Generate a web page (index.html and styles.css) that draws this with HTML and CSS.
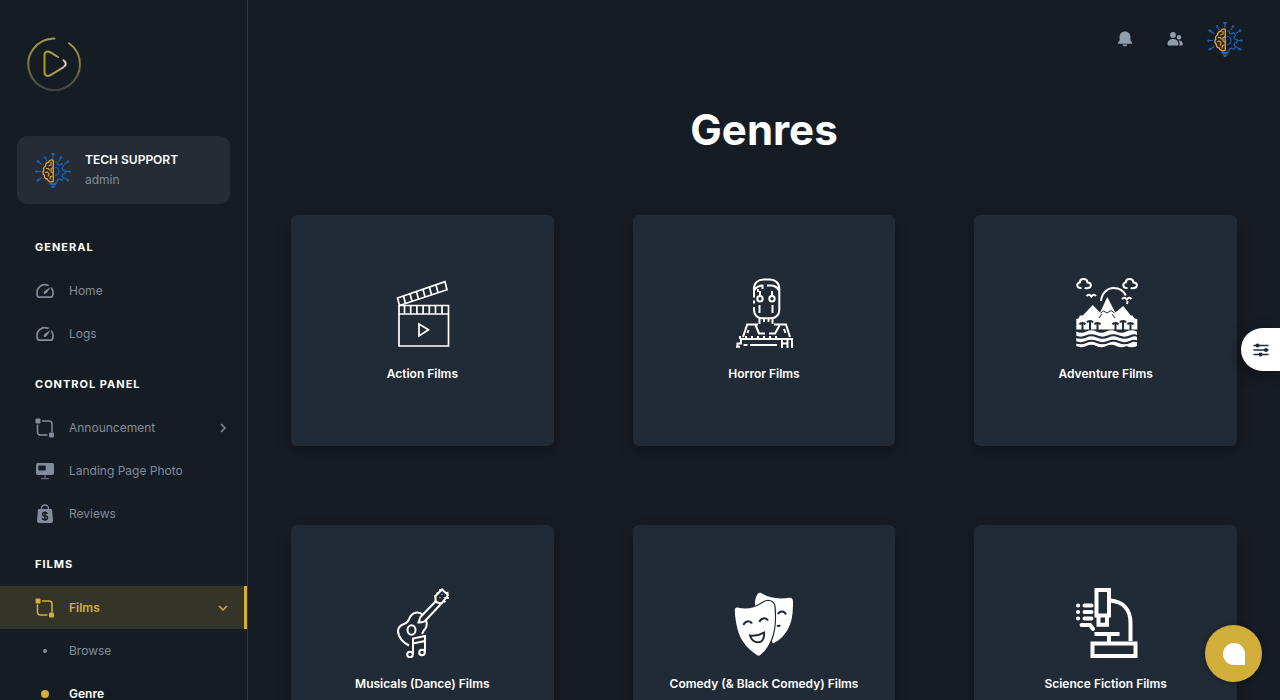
FILE: index.html
```html
<!DOCTYPE html>
<html lang="en">
<head>
    <meta charset="UTF-8">
    <meta name="viewport" content="width=device-width, initial-scale=1.0">
    <title>Genres</title>
    <link rel="stylesheet" href="styles.css">
</head>
<body>
    <svg class="sprite" aria-hidden="true">
        <symbol id="avatar" viewBox="0 0 36 36">
            <g fill="none" stroke="#1766bd" stroke-width="1.1">
                <path d="M18 3v4M10.500 6.500l2 3M25.500 6.500l-2 3M3.500 10l3.500 2.500M32.500 10l-3.500 2.500M2 19.500h4M30 19.500h4M3.500 28l3.500-2.500M32.500 28l-3.500-2.500"/>
                <path d="M20 10h2l.5 2 2 1 2-1.500 2 2.500-1.500 2 .8 2 2.200.5v3l-2.200.5-.8 2 1.500 2-2 2.500-2-1.500-2 1-.5 2h-2"/>
                <path d="M20 15.500a4 4 0 0 1 0 8"/>
            </g>
            <g fill="#1766bd">
                <path d="M16 1h4l-1 2.500h-2zM14 31h8l-1 2h-6zM15.500 33.500h5L19 36h-2z"/>
                <circle cx="10" cy="5.500" r="1.200"/><circle cx="26" cy="5.500" r="1.200"/>
                <circle cx="3" cy="9.700" r="1.400"/><circle cx="33" cy="9.700" r="1.400"/>
                <circle cx="1.500" cy="19.500" r="1.200"/><circle cx="34.500" cy="19.500" r="1.200"/>
                <circle cx="3" cy="28.300" r="1.300"/><circle cx="33" cy="28.300" r="1.300"/>
            </g>
            <path fill="#2b2a26" stroke="#eea63a" stroke-width="1.300" d="M18.300 8.300c-2-1-4.300.2-4.600 2-2 0-3.500 1.700-3 3.700-2 .8-2.600 2.600-1.900 4.200-1.500 1.600-1.200 4 .5 5-.2 2.200 1.100 3.700 3 3.800.4 2.500 4 3.700 6 2z"/>
            <path fill="none" stroke="#eea63a" stroke-width="1.100" d="M16 10v3l-2.500 1M11 16.500h2.500l1 2M18 15.500l-2 1.500v3l2 1M10 20.500l2.500-.5 1.500 2-1 2.500M17.500 24l-2 .5-.5 3"/>
        </symbol>
        <symbol id="gauge" viewBox="0 0 20 20">
            <path fill="none" stroke="currentColor" stroke-width="1.700" stroke-linecap="round" d="M13 4.300C8 2.300 2 5.500 2 11.500c0 1.500.2 2.800.7 3.900.2.500.6.800 1.200.8h12.200c.6 0 1-.3 1.200-.8 1.200-2.800.8-6-.7-8.100"/>
            <path fill="currentColor" d="M15.300 6.200c-2.700 1.500-5.700 3.500-6.400 4.700-.8 1.400.9 2.800 2.100 1.700 1.100-1 3.100-3.900 4.300-6.400z"/>
        </symbol>
        <symbol id="nodes" viewBox="0 0 20 20">
            <path fill="none" stroke="currentColor" stroke-width="1.500" stroke-linecap="round" d="M7.500 3H14a3 3 0 0 1 3 3v7.500M2.500 7v7a3 3 0 0 0 3 3h6.500"/>
            <rect x="0.500" y="0.500" width="5" height="5" rx="1" fill="currentColor"/>
            <rect x="14" y="14.500" width="5" height="5" rx="1" fill="currentColor"/>
        </symbol>
    </svg>

    <aside class="sidebar">
        <a class="logo" href="#" aria-label="Dashboard">
            <svg viewBox="0 0 54 54" fill="none" stroke-width="2" stroke-linecap="round">
                <defs>
                    <linearGradient id="ring" x1="0" y1="0" x2="0" y2="1">
                        <stop offset="0" stop-color="#a09c3c"/>
                        <stop offset="0.450" stop-color="#847d3b"/>
                        <stop offset="1" stop-color="#44464a"/>
                    </linearGradient>
                    <linearGradient id="play" x1="0" y1="0" x2="1" y2="0">
                        <stop offset="0" stop-color="#a9a01f"/>
                        <stop offset="0.600" stop-color="#aaa352"/>
                        <stop offset="1" stop-color="#dcd8c4"/>
                    </linearGradient>
                </defs>
                <path stroke="url(#ring)" d="M27.500 1.500A25.800 25.800 0 1 0 42 6.200"/>
                <path stroke="url(#play)" d="M31 20l-7.500-4.600c-3-1.800-6-.8-6 2.600v17c0 3.800 3 5 6 3.200l12.500-7.700c3.500-2.200 3.700-4.500.5-7.300"/>
            </svg>
        </a>

        <a class="account" href="#">
            <svg class="account-avatar" aria-hidden="true"><use href="#avatar"/></svg>
            <span class="account-text">
                <span class="account-name">TECH SUPPORT</span>
                <span class="account-role">admin</span>
            </span>
        </a>

        <nav class="nav">
            <h2 class="nav-title">GENERAL</h2>
            <a class="nav-item" href="#">
                <svg class="nav-icon" aria-hidden="true"><use href="#gauge"/></svg>
                <span class="nav-label">Home</span>
            </a>
            <a class="nav-item" href="#">
                <svg class="nav-icon" aria-hidden="true"><use href="#gauge"/></svg>
                <span class="nav-label">Logs</span>
            </a>

            <h2 class="nav-title">CONTROL PANEL</h2>
            <button class="nav-item" type="button" aria-expanded="false">
                <svg class="nav-icon" aria-hidden="true"><use href="#nodes"/></svg>
                <span class="nav-label">Announcement</span>
                <svg class="nav-arrow" viewBox="0 0 12 12" aria-hidden="true"><path d="M4 2l4 4-4 4"/></svg>
            </button>
            <a class="nav-item" href="#">
                <svg class="nav-icon" viewBox="0 0 20 20" aria-hidden="true">
                    <path fill="currentColor" fill-rule="evenodd" d="M3 2h14a2 2 0 0 1 2 2v8a2 2 0 0 1-2 2H3a2 2 0 0 1-2-2V4a2 2 0 0 1 2-2zm1.500 2.500A1.200 1.200 0 0 0 3.300 5.700v2.600a1.200 1.200 0 0 0 1.200 1.200h5a1.200 1.200 0 0 0 1.200-1.200V5.700a1.200 1.200 0 0 0-1.200-1.200z"/>
                    <path fill="none" stroke="currentColor" stroke-width="1.200" d="M10 14v3.500M6 17.600h8" opacity="0.700"/>
                </svg>
                <span class="nav-label">Landing Page Photo</span>
            </a>
            <a class="nav-item" href="#">
                <svg class="nav-icon" viewBox="0 0 20 20" aria-hidden="true">
                    <path fill="currentColor" d="M4.500 5h11c1 0 1.500.5 1.600 1.300l.9 10c.1 1.500-.7 2.700-2.200 2.700H4.200C2.700 19 1.900 17.800 2 16.300l.9-10C3 5.500 3.500 5 4.500 5z"/>
                    <path fill="none" stroke="currentColor" stroke-width="1.300" d="M6.500 6V4.500a3.500 3.500 0 0 1 7 0V6"/>
                    <path fill="none" stroke="#161c24" stroke-width="1.400" d="M12.500 10c-.4-1-1.300-1.500-2.500-1.500-3.200 0-3.200 3.400 0 3.500 3.500.1 3.300 3.700 0 3.700-1.500 0-2.500-.6-2.800-1.700M10 7.300v9.700"/>
                </svg>
                <span class="nav-label">Reviews</span>
            </a>

            <h2 class="nav-title">FILMS</h2>
            <button class="nav-item nav-item-active" type="button" aria-expanded="true">
                <svg class="nav-icon" aria-hidden="true"><use href="#nodes"/></svg>
                <span class="nav-label">Films</span>
                <svg class="nav-arrow" viewBox="0 0 12 12" aria-hidden="true"><path d="M2 4l4 4 4-4"/></svg>
            </button>
            <a class="nav-item" href="#">
                <span class="nav-bullet"></span>
                <span class="nav-label">Browse</span>
            </a>
            <a class="nav-item nav-item-current" href="#" aria-current="page">
                <span class="nav-bullet"></span>
                <span class="nav-label">Genre</span>
            </a>
        </nav>
    </aside>

    <div class="page">
        <header class="topbar">
            <button class="icon-button" type="button" aria-label="Notifications">
                <svg viewBox="0 0 18 18" fill="currentColor" aria-hidden="true">
                    <path d="M9 1.500c3.200 0 5.400 2.300 5.400 5.300v3.700l1.500 1.900c.5.700.2 1.400-.6 1.400H2.700c-.8 0-1.100-.7-.6-1.400l1.500-1.900V6.800c0-3 2.200-5.300 5.400-5.300zM6.500 14.500h5c-.3 1.300-1.200 2-2.500 2s-2.200-.7-2.500-2z"/>
                </svg>
            </button>
            <button class="icon-button" type="button" aria-label="Contacts">
                <svg viewBox="0 0 18 18" fill="currentColor" aria-hidden="true">
                    <circle cx="7" cy="5" r="2.900"/><circle cx="13" cy="7.300" r="2.200"/>
                    <path d="M1.500 14c0-3 2.300-5 5.500-5s5.500 2 5.500 5c0 1-.5 1.500-1.500 1.500H3c-1 0-1.500-.5-1.500-1.500zM12.500 10.400c2.700-.2 4.300 1.200 4.300 3.600 0 1-.5 1.500-1.300 1.500h-2.300c.9-1.800.4-3.700-.7-5.100z"/>
                </svg>
            </button>
            <button class="avatar-button" type="button" aria-label="Account">
                <svg aria-hidden="true"><use href="#avatar"/></svg>
            </button>
        </header>

        <main class="content">
            <h1 class="page-title">Genres</h1>

            <div class="genres">
                <a class="card" href="#">
                    <svg class="card-icon" viewBox="0 0 70 70" aria-hidden="true" stroke-width="1.700">
                        <path d="M12 27.500h49.500V68H12zM12 36h49.500M17.500 27.500V36M23.700 27.500V36M29.900 27.500V36M36.100 27.500V36M42.300 27.500V36M48.500 27.500V36M55 27.500V36"/>
                        <path d="M10.500 20L58 3.700l2 8-47.500 15.800zM16.500 18l2 7.500M23 15.800l2 7.500M29.500 13.600l2 7.500M36 11.400l2 7.500M42.500 9.200l2 7.500M49 7l2 7.500"/>
                        <path d="M32 46v12l9.500-6.300z"/>
                    </svg>
                    <span class="card-label">Action Films</span>
                </a>
                <a class="card" href="#">
                    <svg class="card-icon" viewBox="0 0 70 70" aria-hidden="true" stroke-width="2">
                        <path d="M25 29v3c0 5 3.500 8.300 8 8.300h9c4.700 0 8.300-3.300 8.300-8.300V11c0-6-4-9.500-9.500-9.500h-6c-5.800 0-9.800 3.500-9.800 9.500v8.500M25 22.500v3M25.500 12c2-3.500 5-4.500 9-4.500M38 7.500h4c4 0 6.500 2.500 8 5M29 11v3M33.500 8v3"/>
                        <circle cx="31" cy="20.700" r="2.700"/><circle cx="43" cy="20.700" r="2.700"/>
                        <path d="M31 13v4.500M43 13v4.500M30.500 27v8M43.500 27v8M30.500 41v5M35 41v3M39.500 41v3M43.500 41v5"/>
                        <path d="M14 59l4.200-12.500H29M45 46.500h12L61 59M26.500 47l3.500 8.500h6M40 55.500h6l4.500-8M19.500 52l-1 3M55 51l1.500 4"/>
                        <path d="M8.500 69v-3.500H12V61h51v9M11 61v-3M17 61v-3M23 61v-3M29 61v-3M35 61v-3M41 61v-3M47 61v-3M7 68.800h4M14.500 67h4M21 67h27M53 70v-8.500M58.500 70v-8.500M53 65.500h5.500"/>
                    </svg>
                    <span class="card-label">Horror Films</span>
                </a>
                <a class="card" href="#">
                    <svg class="card-icon" viewBox="0 0 70 70" aria-hidden="true" stroke-width="2">
                        <path d="M10.500 10c-5 .5-5.500-5-1.700-5.600C9 0 16 0 16.500 4.400c4.500 0 4.500 6 0 5.600-1 .6-2 .5-2.500-.5"/>
                        <path d="M56.500 10c-5 .5-5.500-5-1.700-5.600C55 0 62 0 62.500 4.400c4.500 0 4.500 6 0 5.600-1 .6-2 .5-2.500-.5"/>
                        <path d="M30 23c.5-7.500 6-13 12.800-13 5.500 0 9.800 3 12 7.500M56 26c.3-.8.500-2 .5-3M15.500 18c2-2 3.500-1.500 4.800.5 1.300-2 3-2.500 4.700-.5M51 21c2-2 3.500-1.500 4.800.5 1.300-2 3-2.500 4.700-.5"/>
                        <path class="solid" d="M5.300 51.500V41c2 0 3-1 3.500-3.500h3L21.700 27l7.300 7.500L36.300 19l8 15.500 8-6.500 7.500 9.500h2c.5 2.500 2 3.500 4.500 3.500v10.500z"/>
                        <path class="solid" d="M5.300 53.500q5 2.500 10 0t10 0 10 0 10 0 10 0 10.700 0V68q-5.300 2.500-10.700 0-5 2.500-10 0t-10 0-10 0-10 0-10 0z"/>
                        <path class="cut" d="M4 58.500q5.700 2.500 11 0t11 0 11 0 11 0 11 0 8 0M4 64q5.700 2.500 11 0t11 0 11 0 11 0 11 0 8 0"/>
                        <path class="cut" d="M11.500 52V46M8.500 46.500c1-2 5-2 6 0M19 52v-8M16 44.500c1-2 5-2 6 0M26.500 52v-6M23.500 46.500c1-2 5-2 6 0M44.500 52v-6M41.500 46.500c1-2 5-2 6 0M52 52v-8M49 44.500c1-2 5-2 6 0M59.500 52v-6M56.500 46.500c1-2 5-2 6 0"/>
                        <path class="cut thin" d="M29.500 35l3-2 3.500 2 4-2.500 3.500 2.500M28 40l3-4M44 40l-3-4"/>
                    </svg>
                    <span class="card-label">Adventure Films</span>
                </a>
                <a class="card" href="#">
                    <svg class="card-icon" viewBox="0 0 70 70" aria-hidden="true" stroke-width="2">
                        <path d="M22 57.500c-5-2-11-8-11-14.500 0-5 4-6.500 7-7.500 4.500-1.500 3.500-5.500 6.500-8.500s8-3.500 11.500 0M39 32c1.500 4 .5 8-2.500 11l-1.500 3"/>
                        <path d="M33 29.500l16.500-17M37.500 33.500l16-17M33 29.500c0 2-1 3-1.500 5 2 0 3.500 0 6-1"/>
                        <path d="M48.500 14V8L55 1.500l6 5.500-6.500 8.500zM47 8.500l2-.5M49.500 5l2 1M53 1v2.500M61.500 4.500L59 5.500M62 10l-3-.5M58.500 14l-2-1.500M55 6.500v.5M53 9.500v.5M57.500 9v.5"/>
                        <ellipse cx="24.500" cy="42" rx="4" ry="4.700"/>
                        <path d="M26 66.500V50.500l12-2.500v16M26 55.500l12-2.500"/>
                        <circle cx="23" cy="66.500" r="2.800"/><circle cx="35" cy="64.500" r="2.800"/>
                    </svg>
                    <span class="card-label">Musicals (Dance) Films</span>
                </a>
                <a class="card" href="#">
                    <svg class="card-icon" viewBox="0 0 70 70" aria-hidden="true" stroke-width="2">
                        <path class="solid" d="M26 18c-.3-4 .3-8 2-11 1-2 2.500-2.700 4.500-1.700C40 10 50 11.500 60 9.800c2.500-.4 4 1 4 3.700 0 10-.5 19-4.500 26.500C56 46.500 51.500 52 44 55.500z"/>
                        <path class="cut" d="M49 26c2-3.500 6.500-3.500 8 .5M48 37.500c1.500 1 2.500.5 3-.5"/>
                        <path class="solid edge" d="M8.500 19.500c9 2.500 18 .5 26-5 4-2.700 10.500-1.700 11 4.500.8 11 .8 21-2.800 31-2.500 7-6.500 13.500-11.500 17-1.300.9-2 .8-3.300 0C17.500 60 11 51.500 8.500 41c-1.500-6-2.500-12-2.700-18.500 0-2.300 1-3.500 2.700-3z"/>
                        <path class="cut" d="M14.500 37c1-4 6.500-5 8.500-1.500M30.500 34c1-4 6.500-5 8.500-1.500M21 47.500c4.500.7 9.500-.5 14-3 .8 8-3 9.700-6 9.700-3.500 0-6.500-2-8-6.700z"/>
                    </svg>
                    <span class="card-label">Comedy (&amp; Black Comedy) Films</span>
                </a>
                <a class="card" href="#">
                    <svg class="card-icon" viewBox="0 0 70 70" aria-hidden="true" stroke-width="4">
                        <rect x="25.500" y="2" width="12.500" height="25.500"/>
                        <path d="M27.500 28v8.700h8.500V28M39 12.500c13 1 20.500 9 20.500 22.500v18M23.500 46h25M38 46v8"/>
                        <rect x="21.500" y="55.500" width="43" height="12.500"/>
                        <path stroke-linecap="round" d="M13.500 17.500h7M13.500 24h7M13.500 30.500h7M10.500 37h8.500l3 4M7 17.500h.1M7 24h.1M7 30.500h.1"/>
                    </svg>
                    <span class="card-label">Science Fiction Films</span>
                </a>
            </div>
        </main>
    </div>

    <button class="settings-toggle" type="button" aria-label="Settings">
        <svg viewBox="0 0 16 16" aria-hidden="true">
            <path fill="none" stroke="#212b36" stroke-width="1.400" stroke-linecap="round" d="M1 3.500h14M1 8h14M1 12.500h14"/>
            <g fill="#212b36"><circle cx="4.500" cy="3.500" r="2"/><circle cx="13" cy="8" r="2"/><circle cx="7.500" cy="12.500" r="2"/></g>
        </svg>
    </button>

    <button class="chat-toggle" type="button" aria-label="Open chat">
        <span class="chat-bubble"></span>
    </button>
</body>
</html>
```

FILE: styles.css
```css
* {
    box-sizing: border-box;
}
html {
    scrollbar-width: none;
}
body {
    margin: 0;
    display: flex;
    min-height: 100vh;
    background: #161c24;
    color: #fff;
    font-family: Inter, "Open Sans", sans-serif;
    font-size: 12px;
    line-height: 18px;
}
a {
    color: inherit;
    text-decoration: none;
}
button {
    padding: 0;
    border: none;
    background: none;
    color: inherit;
    font: inherit;
    cursor: pointer;
}
svg {
    display: block;
    flex-shrink: 0;
}
.sprite {
    position: absolute;
    width: 0;
    height: 0;
}

/* Sidebar */
.sidebar {
    position: sticky;
    top: 0;
    flex: 0 0 248px;
    height: 100vh;
    overflow: hidden;
    border-right: 1px solid #2f3740;
}
.logo {
    display: block;
    width: 54px;
    margin: 37px 27px 45px;
}
.account {
    display: flex;
    align-items: center;
    gap: 14px;
    margin: 0 17px 14px;
    padding: 14px 18px;
    border-radius: 10px;
    background: #252c36;
}
.account-avatar {
    width: 36px;
    height: 36px;
}
.account-text {
    display: flex;
    flex-direction: column;
    line-height: 20px;
}
.account-name {
    font-weight: 600;
}
.account-role {
    color: #818d9a;
}
.nav-title {
    margin: 0;
    padding: 20px 35px 13px;
    font-size: 11px;
    font-weight: 700;
    line-height: 18px;
    letter-spacing: 1px;
}
.nav-item {
    display: flex;
    align-items: center;
    gap: 14px;
    width: 100%;
    height: 43px;
    padding: 0 18px 0 35px;
    color: #818d9a;
    text-align: left;
}
.nav-item-active {
    border-right: 3px solid #d4af37;
    padding-right: 15px;
    background: #353429;
    color: #d4af37;
    font-weight: 600;
}
.nav-item-current {
    color: #fff;
    font-weight: 600;
}
.nav-icon {
    width: 20px;
    height: 20px;
}
.nav-label {
    flex: 1;
}
.nav-arrow {
    width: 12px;
    height: 12px;
    fill: none;
    stroke: currentColor;
    stroke-width: 1.5;
}
.nav-bullet {
    width: 4px;
    height: 4px;
    margin: 0 8px;
    border-radius: 50%;
    background: #818d9a;
}
.nav-item-current .nav-bullet {
    width: 8px;
    height: 8px;
    margin: 0 6px;
    background: #d4af37;
}

/* Main area */
.page {
    flex: 1;
    min-width: 0;
}
.topbar {
    display: flex;
    align-items: center;
    justify-content: flex-end;
    gap: 14px;
    height: 78px;
    padding: 0 37px;
}
.icon-button {
    display: grid;
    place-items: center;
    width: 36px;
    height: 36px;
    color: #919eab;
}
.icon-button svg {
    width: 18px;
    height: 18px;
}
.avatar-button svg {
    width: 36px;
    height: 36px;
}
.content {
    padding: 24px 43px 78px;
}
.page-title {
    margin: 0 0 57px;
    font-size: 42px;
    font-weight: 700;
    line-height: 56px;
    text-align: center;
}
.genres {
    display: grid;
    grid-template-columns: repeat(3, 1fr);
    gap: 79px;
}
.card {
    display: flex;
    flex-direction: column;
    align-items: center;
    gap: 17px;
    padding: 63px 10px;
    border-radius: 6px;
    background: #212b36;
    box-shadow: 0 6px 14px rgba(0, 0, 0, 0.25);
    font-weight: 600;
    text-align: center;
}
.card-icon {
    width: 70px;
    height: 70px;
    fill: none;
    stroke: #fff;
}
.card-icon .solid {
    fill: #fff;
    stroke: none;
}
.card-icon .edge {
    stroke: #212b36;
    stroke-width: 2.5;
    paint-order: stroke;
}
.card-icon .cut {
    stroke: #212b36;
}
.card-icon .thin {
    stroke-width: 1;
}

/* Floating buttons */
.settings-toggle {
    position: fixed;
    top: calc(50% - 22px);
    right: 0;
    display: grid;
    place-items: center;
    width: 39px;
    height: 43px;
    border-radius: 22px 0 0 22px;
    background: #fff;
    box-shadow: -4px 4px 14px rgba(0, 0, 0, 0.35);
}
.settings-toggle svg {
    width: 16px;
    height: 16px;
}
.chat-toggle {
    position: fixed;
    right: 18px;
    bottom: 18px;
    display: grid;
    place-items: center;
    width: 57px;
    height: 57px;
    border-radius: 50%;
    background: #d1ae39;
    box-shadow: 0 1px 6px rgba(0, 0, 0, 0.3);
}
.chat-bubble {
    width: 22px;
    height: 22px;
    border-radius: 50% 50% 0 50%;
    background: #fff;
}
```
